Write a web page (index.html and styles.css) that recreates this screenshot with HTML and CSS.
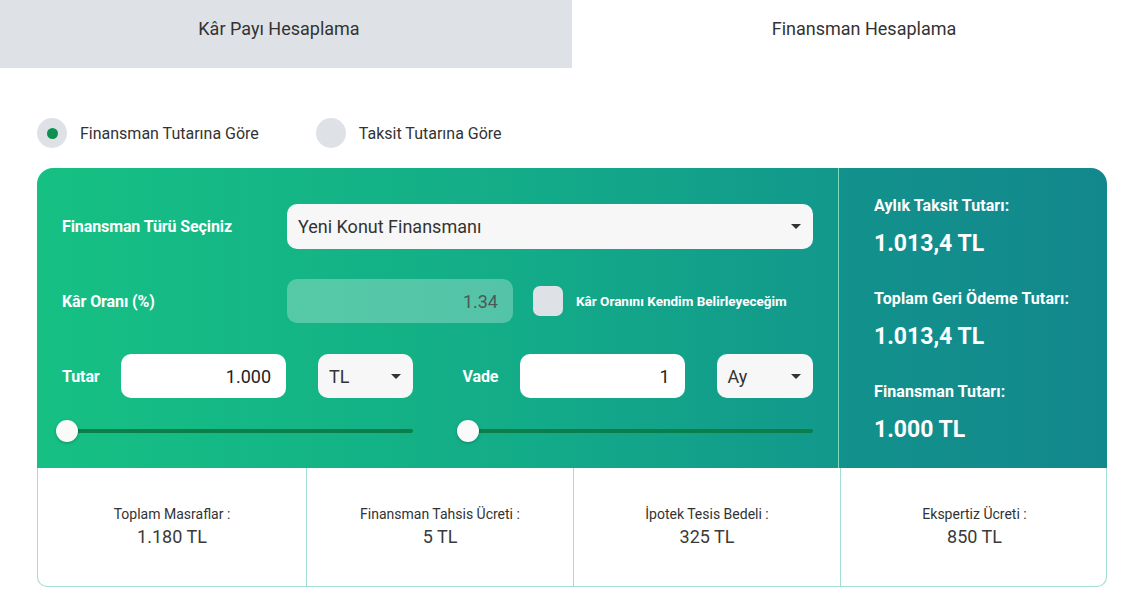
FILE: index.html
```html
<!DOCTYPE html>
<html lang="tr">
<head>
<meta charset="utf-8">
<title>Finansman Hesaplama</title>
<link rel="stylesheet" href="styles.css">
</head>
<body>
<div class="page">
  <div class="tabs">
    <div class="tab tab-inactive">Kâr Payı Hesaplama</div>
    <div class="tab tab-active">Finansman Hesaplama</div>
  </div>
  <div class="content">
    <div class="radios">
      <label class="radio"><span class="radio-circle checked"><span class="radio-dot"></span></span><span>Finansman Tutarına Göre</span></label>
      <label class="radio"><span class="radio-circle"></span><span>Taksit Tutarına Göre</span></label>
    </div>
    <div class="card">
      <div class="card-main">
        <div class="form">
          <div class="row row-type">
            <div class="label">Finansman Türü Seçiniz</div>
            <div class="select select-wide"><span>Yeni Konut Finansmanı</span><span class="caret"></span></div>
          </div>
          <div class="row row-rate">
            <div class="label">Kâr Oranı (%)</div>
            <div class="input input-disabled">1.34</div>
            <span class="checkbox"></span>
            <span class="check-label">Kâr Oranını Kendim Belirleyeceğim</span>
          </div>
          <div class="row row-amount">
            <div class="half">
              <div class="field">
                <div class="label label-short">Tutar</div>
                <div class="input input-num">1.000</div>
                <div class="select select-small"><span>TL</span><span class="caret"></span></div>
              </div>
              <div class="slider"><div class="track"><span class="thumb"></span></div></div>
            </div>
            <div class="half">
              <div class="field">
                <div class="label label-short label-vade">Vade</div>
                <div class="input input-num">1</div>
                <div class="select select-small"><span>Ay</span><span class="caret"></span></div>
              </div>
              <div class="slider"><div class="track"><span class="thumb"></span></div></div>
            </div>
          </div>
        </div>
        <div class="summary">
          <div class="sum-label">Aylık Taksit Tutarı:</div>
          <div class="sum-value">1.013,4 TL</div>
          <div class="sum-label">Toplam Geri Ödeme Tutarı:</div>
          <div class="sum-value">1.013,4 TL</div>
          <div class="sum-label">Finansman Tutarı:</div>
          <div class="sum-value">1.000 TL</div>
        </div>
      </div>
      <div class="costs">
        <div class="cost"><div class="cost-label">Toplam Masraflar :</div><div class="cost-value">1.180 TL</div></div>
        <div class="cost"><div class="cost-label">Finansman Tahsis Ücreti :</div><div class="cost-value">5 TL</div></div>
        <div class="cost"><div class="cost-label">İpotek Tesis Bedeli :</div><div class="cost-value">325 TL</div></div>
        <div class="cost"><div class="cost-label">Ekspertiz Ücreti :</div><div class="cost-value">850 TL</div></div>
      </div>
    </div>
  </div>
</div>
</body>
</html>
```

FILE: styles.css
```css
* { box-sizing: border-box; }
html, body { margin: 0; padding: 0; background: #fff; overflow: hidden; }
body { font-family: Roboto, "Noto Sans", "Liberation Sans", sans-serif; color: #333; }
.page { width: 1144px; }

.tabs { display: flex; height: 68px; }
.tab { width: 572px; flex: 0 0 572px; display: flex; align-items: center; justify-content: center; font-size: 18px; color: #333; padding-bottom: 11px; }
.tab-inactive { background: #dee2e6; padding-right: 14px; }
.tab-active { background: #fff; padding-left: 12px; }

.content { padding: 0 37px; }
.radios { display: flex; gap: 57px; margin-top: 50px; height: 30px; }
.radio { display: flex; align-items: center; gap: 13px; font-size: 16px; color: #333; }
.radio-circle { width: 30px; height: 30px; border-radius: 50%; background: #dee2e6; display: flex; align-items: center; justify-content: center; }
.radio-dot { width: 11px; height: 11px; border-radius: 50%; background: #0d8f4f; }

.card { margin-top: 20px; }
.card-main { display: grid; grid-template-columns: 802px 268px; border-radius: 16px 16px 0 0; overflow: hidden; }
.form { background: linear-gradient(90deg, #16c083 0%, #13ac88 60%, #12988c 100%); padding: 36px 25px 26px 25px; border-right: 1px solid rgba(255,255,255,0.45); }
.summary { background: linear-gradient(90deg, #12928c 0%, #12888d 100%); padding: 28px 20px 0 35px; color: #fff; }

.row { display: flex; align-items: center; }
.row-rate { margin-top: 30px; }
.row-amount { margin-top: 31px; gap: 50px; align-items: flex-start; }
.label { color: #fff; font-weight: 700; font-size: 16px; width: 225px; flex: 0 0 225px; letter-spacing: -0.1px; }

.select { background: #f7f7f7; border-radius: 10px; height: 45px; display: flex; align-items: center; justify-content: space-between; padding: 0 12px 0 11px; font-size: 18px; color: #333; }
.select-wide { flex: 1; }
.caret { width: 0; height: 0; border-left: 5px solid transparent; border-right: 5px solid transparent; border-top: 5px solid #333; }

.input { height: 44px; border-radius: 10px; display: flex; align-items: center; justify-content: flex-end; padding: 0 15px; font-size: 18px; color: #222; background: #fff; }
.input-disabled { width: 226px; background: rgba(255,255,255,0.28); color: #4a5a55; padding-right: 15px; }
.checkbox { width: 30px; height: 30px; border-radius: 7px; background: #dee2e6; margin-left: 20px; }
.check-label { color: #fff; font-weight: 700; font-size: 13.5px; margin-left: 13px; letter-spacing: 0; }

.half { width: 351px; }
.field { display: flex; align-items: center; }
.label-short { width: 59px; flex: 0 0 59px; }
.label-vade { width: 57px; flex: 0 0 57px; }
.input-num { width: 165px; flex: 0 0 165px; }
.select-small { flex: 1; margin-left: 32px; height: 44px; }

.slider { margin-top: 22px; height: 22px; display: flex; align-items: center; }
.track { position: relative; flex: 1; margin-left: 5px; height: 4px; border-radius: 2px; background: #0b7e49; }
.thumb { position: absolute; left: -11px; top: -9px; width: 22px; height: 22px; border-radius: 50%; background: #fafafa; box-shadow: 0 1px 3px rgba(0,0,0,0.25); }

.sum-label { font-size: 16px; font-weight: 700; line-height: 20px; height: 20px; letter-spacing: 0.1px; }
.sum-value { font-size: 23px; font-weight: 700; line-height: 26px; margin-top: 15px; margin-bottom: 32px; }
.sum-value:last-child { margin-bottom: 0; }

.costs { display: grid; grid-template-columns: 268px 267px 267px 268px; border: 1px solid #a3dcd2; border-top: none; border-radius: 0 0 10px 10px; height: 119px; }
.cost { display: flex; flex-direction: column; align-items: center; justify-content: center; border-left: 1px solid #a3dcd2; padding-bottom: 2px; }
.cost:first-child { border-left: none; }
.cost-label { font-size: 14px; color: #333; }
.cost-value { font-size: 18px; font-weight: 400; color: #3a3a3a; margin-top: 4px; }
```
